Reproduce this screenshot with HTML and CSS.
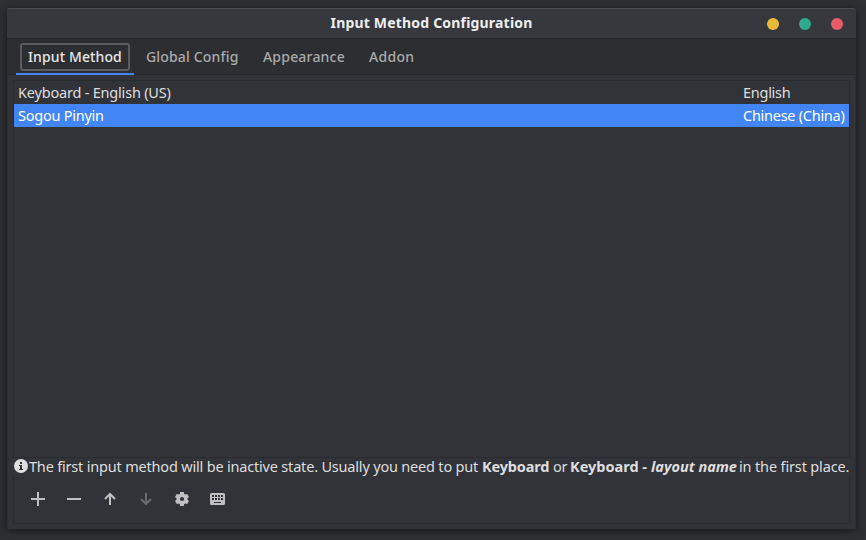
FILE: index.html
```html
<!DOCTYPE html>
<html lang="en">
<head>
<meta charset="utf-8">
<title>Input Method Configuration</title>
<link rel="stylesheet" href="styles.css">
</head>
<body>
<main class="window">
  <header class="titlebar">
    <h1 class="title">Input Method Configuration</h1>
    <div class="controls"><i class="dot min"></i><i class="dot max"></i><i class="dot close"></i></div>
  </header>
  <nav class="tabs">
    <div class="tab active"><span class="focus">Input Method</span></div>
    <div class="tab global">Global Config</div>
    <div class="tab appearance">Appearance</div>
    <div class="tab addon">Addon</div>
  </nav>
  <section class="content">
    <div class="list">
      <div class="row"><span class="kbd">Keyboard - English (US)</span><span class="lang eng">English</span></div>
      <div class="row selected"><span class="sogou">Sogou Pinyin</span><span class="lang chn">Chinese (China)</span></div>
    </div>
    <div class="note">
      <svg class="info" viewBox="0 0 15 15"><circle cx="7" cy="7" r="7" fill="#dededf"/><path d="M6 3h2v2H6zM5 6h3v4h1v1H5v-1h1V7H5z" fill="#303136"/></svg>
      <span class="n1">The first input method will be inactive state. Usually you need to put</span>
      <b class="n2">Keyboard</b>
      <span class="n3">or</span>
      <b class="n4">Keyboard -</b>
      <b class="n5"><em>layout name</em></b>
      <span class="n6">in the first place.</span>
    </div>
    <div class="toolbar">
      <svg viewBox="0 0 16 16"><path d="M7 1h2v6h6v2H9v6H7V9H1V7h6z"/></svg>
      <svg viewBox="0 0 16 16"><path d="M1 7h14v2H1z"/></svg>
      <svg viewBox="0 0 16 16"><path d="M8 14V3M3 8l5-5 5 5" class="line"/></svg>
      <svg viewBox="0 0 16 16" class="disabled"><path d="M8 2v11M3 8l5 5 5-5" class="line"/></svg>
      <svg viewBox="0 0 16 16"><path fill-rule="evenodd" d="M6.200 1h3.600l.4 2 1.100.6 1.900-.7 1.800 3.100-1.500 1.300v1.400l1.500 1.300-1.800 3.100-1.900-.7-1.100.6-.4 2H6.200l-.4-2-1.100-.6-1.900.7L1 10l1.500-1.300V7.300L1 6l1.800-3.100 1.900.7L5.800 3zM8 5.900a2.100 2.100 0 1 0 0 4.200 2.100 2.100 0 0 0 0-4.200z"/></svg>
      <svg viewBox="0 0 16 16"><path fill-rule="evenodd" d="M1.500 2h12A1.500 1.500 0 0 1 15 3.500v9a1.500 1.500 0 0 1-1.500 1.500h-12A1.500 1.500 0 0 1 0 12.500v-9A1.500 1.500 0 0 1 1.500 2zM2 4v2h2V4zM5 4v2h2V4zM8 4v2h2V4zM11 4v2h2V4zM2 7v2h2V7zM5 7v2h2V7zM8 7v2h2V7zM11 7v2h2V7zM4 11v1h7v-1z"/></svg>
    </div>
  </section>
</main>
</body>
</html>
```
FILE: styles.css
```css
* { box-sizing: border-box; }
body {
  margin: 0; height: 540px; overflow: hidden; padding: 8px 10px 11px 7px;
  background: #2f3034; color: #dededf;
  font: 14.5px "Noto Sans", "Open Sans", sans-serif;
}
.window {
  height: 521px; display: flex; flex-direction: column;
  background: #323338; border-radius: 3px 3px 0 0;
  border-left: 1px solid #2d2e32; border-right: 1px solid #2d2e32;
  box-shadow: 0 2px 8px 1px #1c1d20;
}
.titlebar {
  height: 31px; margin: 0 -1px; display: grid; grid-template-columns: 1fr auto 1fr; align-items: center;
  background: #37383d; border-top: 1px solid #4b4c50; border-bottom: 1px solid #26272b;
  border-radius: 3px 3px 0 0; flex: none;
}
.title { grid-column: 2; margin: 0; padding-bottom: 2px; font-size: 14px; line-height: 27px; letter-spacing: .19px; color: #eeeeef; white-space: nowrap; }
.controls { justify-self: end; display: flex; gap: 20px; padding-right: 13px; }
.dot { width: 12px; height: 12px; border-radius: 50%; }
.min { background: #e9ba3a; }
.max { background: #2eaa8e; }
.close { background: #e75c65; }
.tabs {
  height: 36px; flex: none; display: flex; padding-left: 8px;
  background: #2d2e32; border-bottom: 1px solid #25262a; color: #aaaaac; font-weight: 500;
}
.tab { height: 36px; padding-left: 12px; line-height: 36px; white-space: nowrap; font-size: 14px; letter-spacing: .12px; }
.active { width: 118px; padding: 4px 4px 0; border-bottom: 2px solid #4285f5; color: #e6e6e7; }
.focus { display: block; height: 28px; line-height: 24px; padding-left: 6px; border: 2px solid #5b5c5f; border-radius: 3px; }
.global { width: 117px; letter-spacing: .17px; }
.appearance { width: 106px; letter-spacing: .2px; }
.addon { letter-spacing: .3px; }
.content { padding: 5px 5px 6px; flex: 1; display: flex; flex-direction: column; }
.list { height: 378px; border: 1px solid #2a2b2f; }
.row { height: 23px; line-height: 23px; padding: 0 4px; display: flex; justify-content: space-between; white-space: nowrap; }
.selected { background: #4285f5; color: #fff; }
.kbd { letter-spacing: -.2px; }
.sogou { letter-spacing: -.25px; }
.lang { width: 102px; letter-spacing: -.27px; }
.note { height: 17px; line-height: 17px; display: flex; white-space: nowrap; padding-left: 1px; }
.info { width: 15px; height: 15px; margin-top: 1px; flex: none; }
.n1 { width: 453px; flex: none; letter-spacing: -.19px; }
.n2 { width: 71px; flex: none; letter-spacing: -.15px; }
.n3 { width: 17px; flex: none; letter-spacing: -.3px; }
.n4 { width: 81px; flex: none; }
.n5 { width: 88px; flex: none; }
.n6 { width: 110px; flex: none; letter-spacing: -.15px; }
.toolbar { height: 49px; display: flex; gap: 20px; padding: 16px 0 0 16px; border: 1px solid #2a2b2f; border-top: 0; }
.toolbar svg { width: 16px; height: 16px; fill: #c0c0c2; stroke: none; }
.toolbar .line { fill: none; stroke: #c0c0c2; stroke-width: 2; }
.toolbar .disabled .line { stroke: #696a6e; }
```
